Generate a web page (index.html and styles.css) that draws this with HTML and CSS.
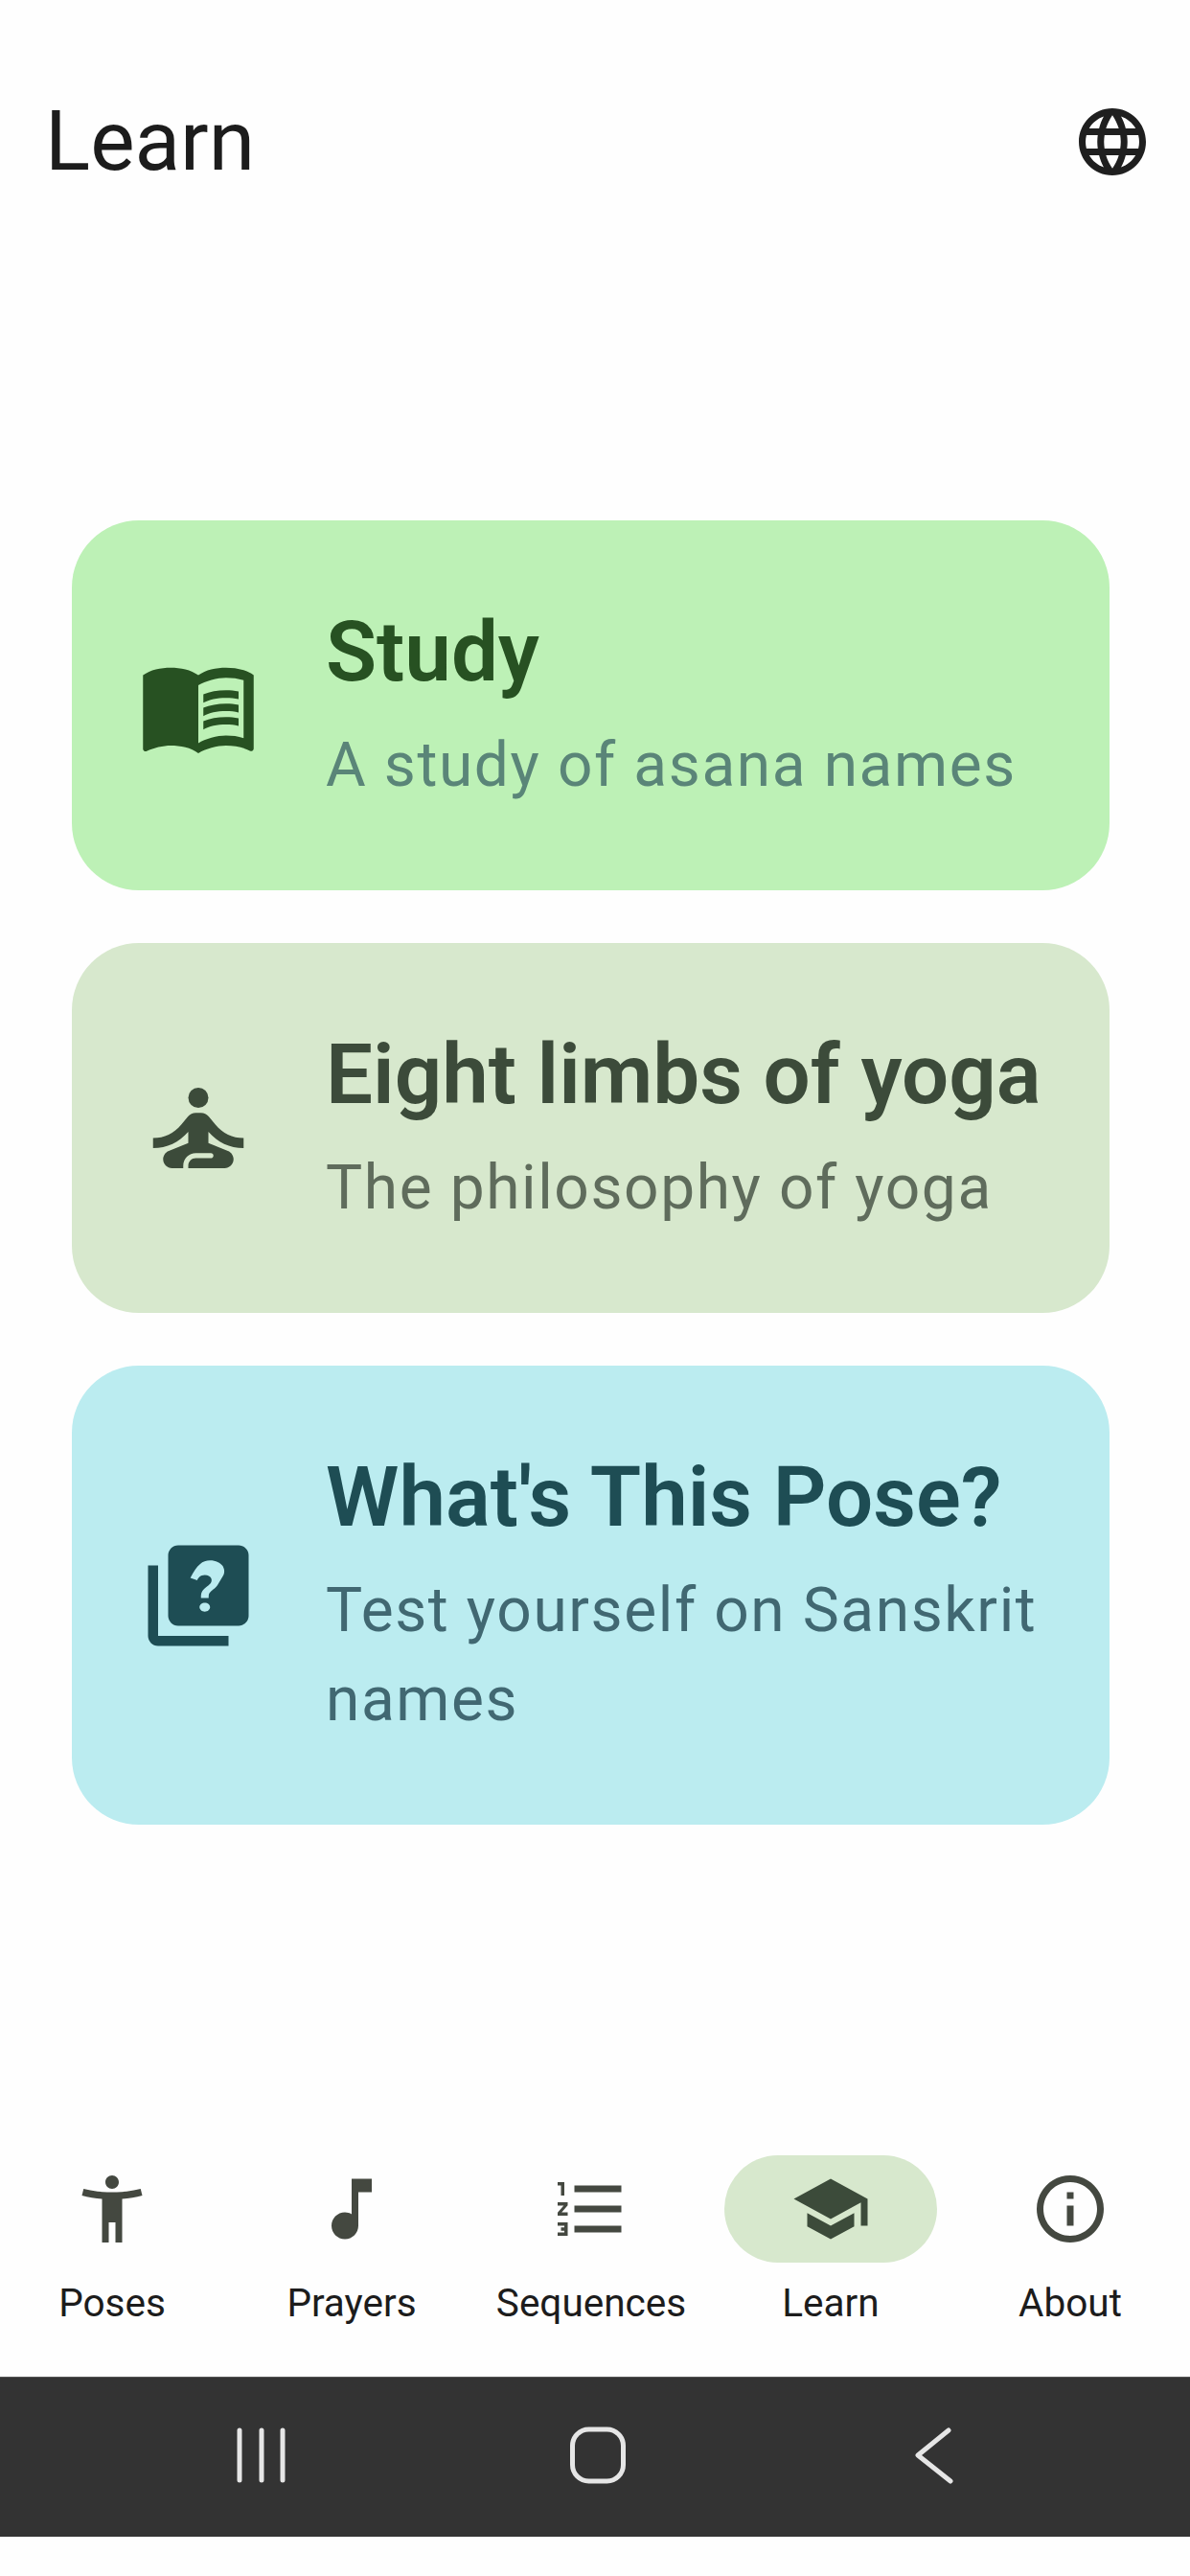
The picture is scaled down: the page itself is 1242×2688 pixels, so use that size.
FILE: index.html
```html
<!DOCTYPE html>
<html lang="en">
<head>
  <meta charset="UTF-8" />
  <title>Learn</title>
  <link rel="stylesheet" href="styles.css">
</head>
<body>

  <header class="top-bar">
    <h1>Learn</h1>
    <svg class="globe" viewBox="0 0 24 24"><path d="M11.99 2C6.47 2 2 6.48 2 12s4.47 10 9.99 10C17.52 22 22 17.52 22 12S17.52 2 11.99 2zm6.93 6h-2.95c-.32-1.25-.78-2.45-1.38-3.56 1.84.63 3.37 1.91 4.33 3.56zM12 4.04c.83 1.2 1.48 2.53 1.91 3.96h-3.82c.43-1.43 1.08-2.76 1.91-3.96zM4.26 14C4.1 13.36 4 12.69 4 12s.1-1.36.26-2h3.38c-.08.66-.14 1.32-.14 2 0 .68.06 1.34.14 2H4.26zm.82 2h2.95c.32 1.25.78 2.45 1.38 3.56-1.84-.63-3.37-1.9-4.33-3.56zm2.95-8H5.08c.96-1.66 2.49-2.93 4.33-3.56C8.81 5.55 8.35 6.75 8.03 8zM12 19.96c-.83-1.2-1.48-2.53-1.91-3.96h3.82c-.43 1.43-1.08 2.76-1.91 3.96zM14.34 14H9.66c-.09-.66-.16-1.32-.16-2 0-.68.07-1.35.16-2h4.68c.09.65.16 1.32.16 2 0 .68-.07 1.34-.16 2zm.25 5.56c.6-1.11 1.06-2.31 1.38-3.56h2.95c-.96 1.65-2.49 2.93-4.33 3.56zM16.36 14c.08-.66.14-1.32.14-2 0-.68-.06-1.34-.14-2h3.38c.16.64.26 1.31.26 2s-.1 1.36-.26 2h-3.38z"/></svg>
  </header>

  <main class="cards">
    <section class="card card-study">
      <svg class="card-icon" viewBox="0 0 24 24"><path d="M21 5c-1.11-.35-2.33-.5-3.5-.5-1.95 0-4.05.4-5.5 1.5-1.45-1.1-3.55-1.5-5.5-1.5S2.45 4.9 1 6v14.65c0 .25.25.5.5.5.1 0 .15-.05.25-.05C3.1 20.45 5.05 20 6.5 20c1.95 0 4.05.4 5.5 1.5 1.35-.85 3.8-1.5 5.5-1.5 1.65 0 3.35.3 4.75 1.05.1.05.15.05.25.05.25 0 .5-.25.5-.5V6c-.6-.45-1.25-.75-2-1zm0 13.5c-1.1-.35-2.3-.5-3.5-.5-1.7 0-4.15.65-5.5 1.5V8c1.35-.85 3.8-1.5 5.5-1.5 1.2 0 2.4.15 3.5.5v11.5z"/><path d="M17.5 10.5c.88 0 1.73.09 2.5.26V9.24c-.79-.15-1.64-.24-2.5-.24-1.7 0-3.24.29-4.5.83v1.66c1.13-.64 2.7-.99 4.5-.99zM13 12.49v1.66c1.13-.64 2.7-.99 4.5-.99.88 0 1.73.09 2.5.26V11.9c-.79-.15-1.64-.24-2.5-.24-1.7 0-3.24.3-4.5.83zM17.5 14.33c-1.7 0-3.24.29-4.5.83v1.66c1.13-.64 2.7-.99 4.5-.99.88 0 1.73.09 2.5.26v-1.52c-.79-.16-1.64-.24-2.5-.24z"/></svg>
      <div class="card-text">
        <h2>Study</h2>
        <p>A study of asana names</p>
      </div>
    </section>

    <section class="card card-limbs">
      <svg class="card-icon" viewBox="0 0 24 24"><circle cx="12" cy="6" r="2"/><path d="M21 16v-2c-2.24 0-4.16-.96-5.6-2.68l-1.34-1.6c-.38-.46-.94-.72-1.53-.72h-1.05c-.59 0-1.15.26-1.53.72l-1.34 1.6C7.16 13.04 5.24 14 3 14v2c2.77 0 5.19-1.17 7-3.25V15l-3.88 1.55c-.67.27-1.12.93-1.12 1.66C5 19.2 5.8 20 6.79 20H9v-.5c0-1.38 1.12-2.5 2.5-2.5h3c.28 0 .5.22.5.5s-.22.5-.5.5h-3c-.83 0-1.5.67-1.5 1.5v.5h7.21c.99 0 1.79-.8 1.79-1.79 0-.73-.45-1.39-1.12-1.66L14 15v-2.25c1.81 2.08 4.23 3.25 7 3.25z"/></svg>
      <div class="card-text">
        <h2>Eight limbs of yoga</h2>
        <p>The philosophy of yoga</p>
      </div>
    </section>

    <section class="card card-quiz">
      <svg class="card-icon" viewBox="0 0 24 24"><path d="M4 6H2v14c0 1.1.9 2 2 2h14v-2H4V6zm16-4H8c-1.1 0-2 .9-2 2v12c0 1.1.9 2 2 2h12c1.1 0 2-.9 2-2V4c0-1.1-.9-2-2-2z"/><path class="quiz-mark" transform="translate(.3 .75) scale(1 .85)" d="M12.99 17c-.59 0-1.05-.47-1.05-1.05 0-.59.47-1.04 1.05-1.04.59 0 1.04.45 1.04 1.04-.01.58-.45 1.05-1.04 1.05zm2.5-6.17c-.63.93-1.23 1.21-1.56 1.81-.13.24-.18.4-.18 1.18h-1.52c0-.41-.06-1.08.26-1.65.41-.73 1.18-1.16 1.63-1.8.48-.68.21-1.94-1.14-1.94-.88 0-1.32.67-1.5 1.23l-1.37-.57C11.51 5.96 12.52 5 13.99 5c1.23 0 2.08.56 2.51 1.26.37.61.58 1.73.01 2.57z"/></svg>
      <div class="card-text">
        <h2>What's This Pose?</h2>
        <p>Test yourself on Sanskrit names</p>
      </div>
    </section>
  </main>

  <nav class="tabs">
    <div class="tab">
      <span class="tab-icon"><svg viewBox="0 0 24 24"><path d="M20.5 6c-2.61.7-5.67 1-8.5 1s-5.89-.3-8.5-1L3 8c1.86.5 4 .83 6 1v13h2v-6h2v6h2V9c2-.17 4.14-.5 6-1l-.5-2zM12 6c1.1 0 2-.9 2-2s-.9-2-2-2-2 .9-2 2 .9 2 2 2z"/></svg></span>
      <span class="tab-label">Poses</span>
    </div>
    <div class="tab">
      <span class="tab-icon"><svg viewBox="0 0 24 24"><path d="M12 3v10.55c-.59-.34-1.27-.55-2-.55-2.21 0-4 1.79-4 4s1.79 4 4 4 4-1.79 4-4V7h4V3h-6z"/></svg></span>
      <span class="tab-label">Prayers</span>
    </div>
    <div class="tab">
      <span class="tab-icon"><svg viewBox="0 0 24 24"><path d="M2 17h2v.5H3v1h1v.5H2v1h3v-4H2v1zm1-9h1V4H2v1h1v3zm-1 3h1.8L2 13.1v.9h3v-1H3.2L5 10.9V10H2v1zm5-6v2h14V5H7zm0 14h14v-2H7v2zm0-6h14v-2H7v2z"/></svg></span>
      <span class="tab-label">Sequences</span>
    </div>
    <div class="tab tab-active">
      <span class="tab-icon"><svg viewBox="0 0 24 24"><path d="M5 13.18v4L12 21l7-3.82v-4L12 17l-7-3.82zM12 3L1 9l11 6 9-4.91V17h2V9L12 3z"/></svg></span>
      <span class="tab-label">Learn</span>
    </div>
    <div class="tab">
      <span class="tab-icon"><svg viewBox="0 0 24 24"><path d="M11 7h2v2h-2zm0 4h2v6h-2zm1-9C6.48 2 2 6.48 2 12s4.48 10 10 10 10-4.48 10-10S17.52 2 12 2zm0 18c-4.41 0-8-3.59-8-8s3.59-8 8-8 8 3.59 8 8-3.59 8-8 8z"/></svg></span>
      <span class="tab-label">About</span>
    </div>
  </nav>

  <!-- Barra do sistema -->
  <div class="system-bar">
    <svg viewBox="0 0 60 60"><path d="M7 4v52M30 4v52M52 4v52"/></svg>
    <svg viewBox="0 0 60 60"><rect x="3.5" y="3" width="53" height="54" rx="17"/></svg>
    <svg viewBox="0 0 60 60"><path d="M45 4 L13 30 L47 57"/></svg>
  </div>

</body>
</html>
```

FILE: styles.css
```css
* {
  box-sizing: border-box;
}

body {
  margin: 0;
  height: 2688px;
  display: flex;
  flex-direction: column;
  font-family: Roboto, "Liberation Sans", sans-serif;
  background: #fefefe;
  color: #1c1c1c;
}

h1, h2, p {
  margin: 0;
}

.top-bar {
  height: 296px;
  display: flex;
  justify-content: space-between;
  align-items: center;
  padding: 0 39px 0 47px;
}

.top-bar h1 {
  font-size: 87.5px;
  font-weight: 400;
  line-height: 1;
}

.globe {
  width: 84px;
  height: 84px;
  fill: #1f1f1f;
}

.cards {
  flex: 1;
  display: flex;
  flex-direction: column;
  gap: 55px;
  padding: 247px 84px 0 75px;
}

.card {
  display: flex;
  align-items: center;
  gap: 70px;
  padding: 0 30px 0 69px;
  border-radius: 70px;
}

.card-icon {
  flex: none;
  width: 126px;
  height: 126px;
}

.card-text {
  padding: 66px 0 84px;
}

.card h2 {
  font-size: 87px;
  font-weight: 600;
  line-height: 143px;
}

.card p {
  font-size: 64px;
  line-height: 93px;
  letter-spacing: 1.6px;
}

.card-study {
  background: #bdf1b6;
  color: #275122;
}

.card-study p {
  color: #5a8578;
}

.card-study .card-icon {
  fill: #275122;
}

.card-limbs {
  background: #d7e8cd;
  color: #3c4b3a;
}

.card-limbs p {
  color: #5f6c5c;
}

.card-limbs .card-icon {
  fill: #3c4b3a;
}

.card-quiz {
  background: #bbecf0;
  color: #1e4d54;
}

.card-quiz p {
  color: #416872;
}

.card-quiz .card-icon {
  fill: #1e4d54;
}

.quiz-mark {
  fill: #bbecf0;
}

.tabs {
  display: flex;
  gap: 16px;
  padding: 0 8px 0 0;
  height: 231px;
}

.tab {
  flex: 1;
  display: flex;
  flex-direction: column;
  align-items: center;
}

.tab-icon {
  width: 222px;
  height: 112px;
  border-radius: 56px;
  display: flex;
  align-items: center;
  justify-content: center;
}

.tab-icon svg {
  width: 84px;
  height: 84px;
  fill: #444840;
}

.tab-active .tab-icon {
  background: #d7e8cd;
}

.tab-active .tab-icon svg {
  fill: #3c4b3a;
}

.tab-label {
  margin-top: 14px;
  font-size: 40.5px;
  line-height: 56px;
  color: #1c1c1c;
}

.system-bar {
  height: 167px;
  margin-bottom: 41px;
  background: #333333;
  border-top: 1px solid #555555;
  display: grid;
  grid-template-columns: repeat(3, 351px);
  justify-content: center;
  justify-items: center;
  align-items: center;
  padding: 0 0 5px 5px;
}

.system-bar svg {
  width: 60px;
  height: 60px;
  fill: none;
  stroke: #e6e6e6;
  stroke-width: 5;
  stroke-linecap: round;
  stroke-linejoin: round;
}
```
